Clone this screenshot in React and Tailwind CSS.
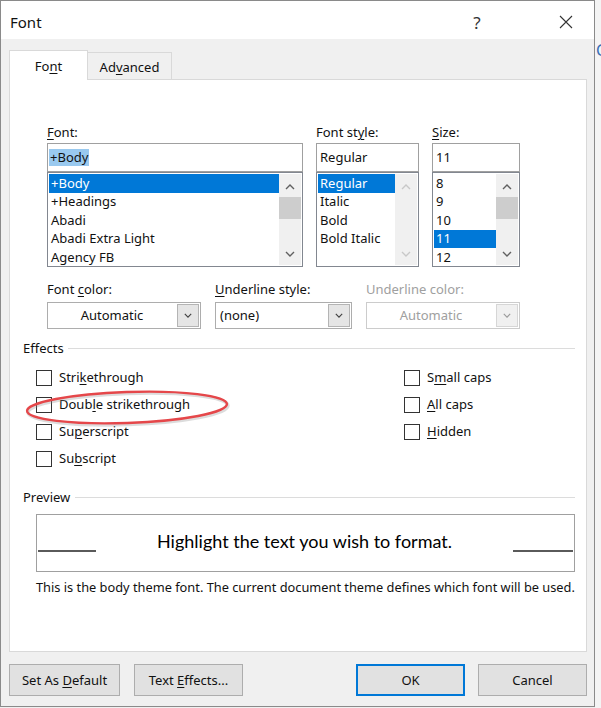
import React from 'react';

function U({ children }) {
  return <span className="underline underline-offset-[2px] decoration-1">{children}</span>;
}

function Chevron({ up, color, w = 10, h = 6 }) {
  return (
    <svg width={w} height={h} viewBox="0 0 10 6">
      <path d={up ? 'M1 5 L5 1 L9 5' : 'M1 1 L5 5 L9 1'} fill="none" stroke={color} strokeWidth="1.4" />
    </svg>
  );
}

function ScrollBar({ thumb, disabled }) {
  const c = disabled ? '#c8c8c8' : '#606060';
  return (
    <div className="w-[22px] h-full flex flex-col bg-[#f0f0f0]">
      <div className="h-[23px] flex items-center justify-center pt-[2px]">
        <Chevron up color={c} />
      </div>
      <div className="flex-1">{thumb && <div className="h-[22px] bg-[#cdcdcd]" />}</div>
      <div className="h-[23px] flex items-center justify-center">
        <Chevron color={c} />
      </div>
    </div>
  );
}

function ListBox({ items, selected, thumb, disabled }) {
  return (
    <div className="h-[95px] border border-[#828790] bg-white p-[1px] flex">
      <div className="flex-1 overflow-hidden">
        {items.map((it) => (
          <div
            key={it}
            className={`h-[18.5px] flex items-center pl-[2px] whitespace-nowrap ${it === selected ? 'bg-[#0078d7] text-white' : ''}`}
          >
            {it}
          </div>
        ))}
      </div>
      <ScrollBar thumb={thumb} disabled={disabled} />
    </div>
  );
}

function Label({ children, muted }) {
  return (
    <div className={`h-[21px] flex items-center ${muted ? 'text-[#a0a0a0]' : ''}`}>
      <span>{children}</span>
    </div>
  );
}

function Select({ text, center, disabled }) {
  return (
    <div className={`h-[27px] mt-[2px] flex bg-white border ${disabled ? 'border-[#cccccc] text-[#a0a0a0]' : 'border-[#adadad]'}`}>
      <div className={`flex-1 flex items-center ${center ? 'justify-center' : 'pl-[4px]'}`}>{text}</div>
      <div className={`w-[22px] m-[1px] flex items-center justify-center border ${disabled ? 'border-[#d6d6d6] bg-[#f0f0f0]' : 'border-[#b4b4b4] bg-[#e5e5e5]'}`}>
        <Chevron color={disabled ? '#9a9a9a' : '#404040'} w={8} h={5} />
      </div>
    </div>
  );
}

function Check({ children }) {
  return (
    <div className="h-[27px] flex items-center">
      <div className="w-[16px] h-[16px] border border-[#333333] bg-white mr-[7px]" />
      <span>{children}</span>
    </div>
  );
}

function Button({ children, w, primary }) {
  return (
    <button
      className={`${w} h-[32px] flex items-center justify-center bg-[#e1e1e1] border ${primary ? 'border-[#0078d7] shadow-[inset_0_0_0_1px_#0078d7]' : 'border-[#adadad]'}`}
    >
      <span>{children}</span>
    </button>
  );
}

export default function App() {
  return (
    <div className="flex w-[601px] h-[708px] bg-[#f0f0f0] overflow-hidden font-['Noto_Sans','Open_Sans',sans-serif] text-[13px] text-[#111111] leading-none">
      <div className="w-[595px] h-[707px] shrink-0 flex flex-col border border-[#8a8a8a] bg-[#f0f0f0]">
        {/* title bar */}
        <div className="h-[38px] shrink-0 bg-white flex items-center">
          <span className="pl-[9px] text-[15px] pt-[4px]">Font</span>
          <span className="ml-auto w-[20px] text-center text-[17px] text-[#333333] pt-[4px]">?</span>
          <svg className="ml-[72px] mr-[21px] mt-[4px]" width="14" height="14" viewBox="0 0 14 14">
            <path d="M1 1 L13 13 M13 1 L1 13" stroke="#333333" strokeWidth="1.1" />
          </svg>
        </div>

        <div className="flex-1 flex flex-col pl-[8px] pr-[7px] pt-[11px]">
          {/* tabs */}
          <div className="flex items-end">
            <div className="w-[79px] h-[30px] mb-[-1px] relative z-10 bg-white border border-b-0 border-[#d9d9d9] flex items-center justify-center pt-[2px]">
              <span>Fo<U>n</U>t</span>
            </div>
            <div className="w-[84px] h-[27px] border border-l-0 border-b-0 border-[#d9d9d9] flex items-center justify-center pt-[2px]">
              <span>Ad<U>v</U>anced</span>
            </div>
          </div>

          {/* panel */}
          <div className="w-[578px] h-[573px] bg-white border border-[#d9d9d9] flex flex-col">
            <div className="flex pl-[37px] pt-[42px] gap-[13px]">
              <div className="w-[256px]">
                <Label><U>F</U>ont:</Label>
                <div className="h-[29px] border border-[#a0a0a0] flex items-center pl-[1px]">
                  <span className="bg-[#99c9ef] leading-[17px] px-[1px]">+Body</span>
                </div>
                <ListBox items={['+Body', '+Headings', 'Abadi', 'Abadi Extra Light', 'Agency FB']} selected="+Body" thumb />
              </div>
              <div className="w-[103px]">
                <Label>Font st<U>y</U>le:</Label>
                <div className="h-[29px] border border-[#a0a0a0] flex items-center pl-[3px]">Regular</div>
                <ListBox items={['Regular', 'Italic', 'Bold', 'Bold Italic']} selected="Regular" disabled />
              </div>
              <div className="w-[88px]">
                <Label><U>S</U>ize:</Label>
                <div className="h-[29px] border border-[#a0a0a0] flex items-center pl-[3px]">11</div>
                <ListBox items={['8', '9', '10', '11', '12']} selected="11" thumb />
              </div>
            </div>

            <div className="flex pl-[37px] mt-[12px] gap-[14px]">
              <div className="w-[154px]">
                <Label>Font <U>c</U>olor:</Label>
                <Select text="Automatic" center />
              </div>
              <div className="w-[137px]">
                <Label><U>U</U>nderline style:</Label>
                <Select text="(none)" />
              </div>
              <div className="w-[154px]">
                <Label muted>Underline color:</Label>
                <Select text="Automatic" center disabled />
              </div>
            </div>

            <div className="flex items-center mt-[10px] h-[19px] pl-[13px] pr-[11px]">
              <span>Effects</span>
              <div className="flex-1 h-px bg-[#dcdcdc] ml-[4px]" />
            </div>

            <div className="relative mt-[6px] pl-[26px] flex">
              <div className="w-[368px]">
                <Check>Stri<U>k</U>ethrough</Check>
                <Check>Doub<U>l</U>e strikethrough</Check>
                <Check>Su<U>p</U>erscript</Check>
                <Check>Su<U>b</U>script</Check>
              </div>
              <div>
                <Check>S<U>m</U>all caps</Check>
                <Check><U>A</U>ll caps</Check>
                <Check><U>H</U>idden</Check>
              </div>
              <svg className="absolute left-[12px] top-[21px]" width="222" height="46" viewBox="0 0 222 46">
                <ellipse cx="106" cy="24" rx="100" ry="15.5" transform="rotate(-2 106 24)" fill="none" stroke="#8a8a8a" strokeOpacity="0.3" strokeWidth="3.5" />
                <ellipse cx="105" cy="22.5" rx="100" ry="15.5" transform="rotate(-2 105 22.5)" fill="none" stroke="#e5474a" strokeWidth="2.4" />
              </svg>
            </div>

            <div className="flex items-center mt-[16px] h-[19px] pl-[13px] pr-[11px]">
              <span>Preview</span>
              <div className="flex-1 h-px bg-[#dcdcdc] ml-[5px]" />
            </div>

            <div className="ml-[26px] mr-[11px] mt-[7px] h-[58px] border border-[#a0a0a0] flex items-center">
              <div className="w-[58px] h-[2px] bg-[#5a5a5a] ml-[1px] mt-[16px]" />
              <div className="flex-1 text-center text-[18px] font-['Lato',sans-serif] text-black pb-[5px]">
                Highlight the text you wish to format.
              </div>
              <div className="w-[60px] h-[2px] bg-[#5a5a5a] mr-[1px] mt-[16px]" />
            </div>

            <div className="mt-[6px] pl-[26px] h-[18px] flex items-center whitespace-nowrap text-[12.8px]">
              <span>This is the body theme font. The current document theme defines which font will be used.</span>
            </div>
          </div>

          {/* buttons */}
          <div className="mt-[12px] flex">
            <Button w="w-[111px]">Set As <U>D</U>efault</Button>
            <div className="ml-[14px]">
              <Button w="w-[109px]">Text <U>E</U>ffects...</Button>
            </div>
            <div className="ml-auto">
              <Button w="w-[109px]" primary>OK</Button>
            </div>
            <div className="ml-[13px]">
              <Button w="w-[109px]">Cancel</Button>
            </div>
          </div>
        </div>
      </div>
      <div className="flex-1 bg-[#f4f4f4] pt-[42px] overflow-hidden">
        <span className="text-[#3b6fb6] text-[16px] ml-[1px]">C</span>
      </div>
    </div>
  );
}
